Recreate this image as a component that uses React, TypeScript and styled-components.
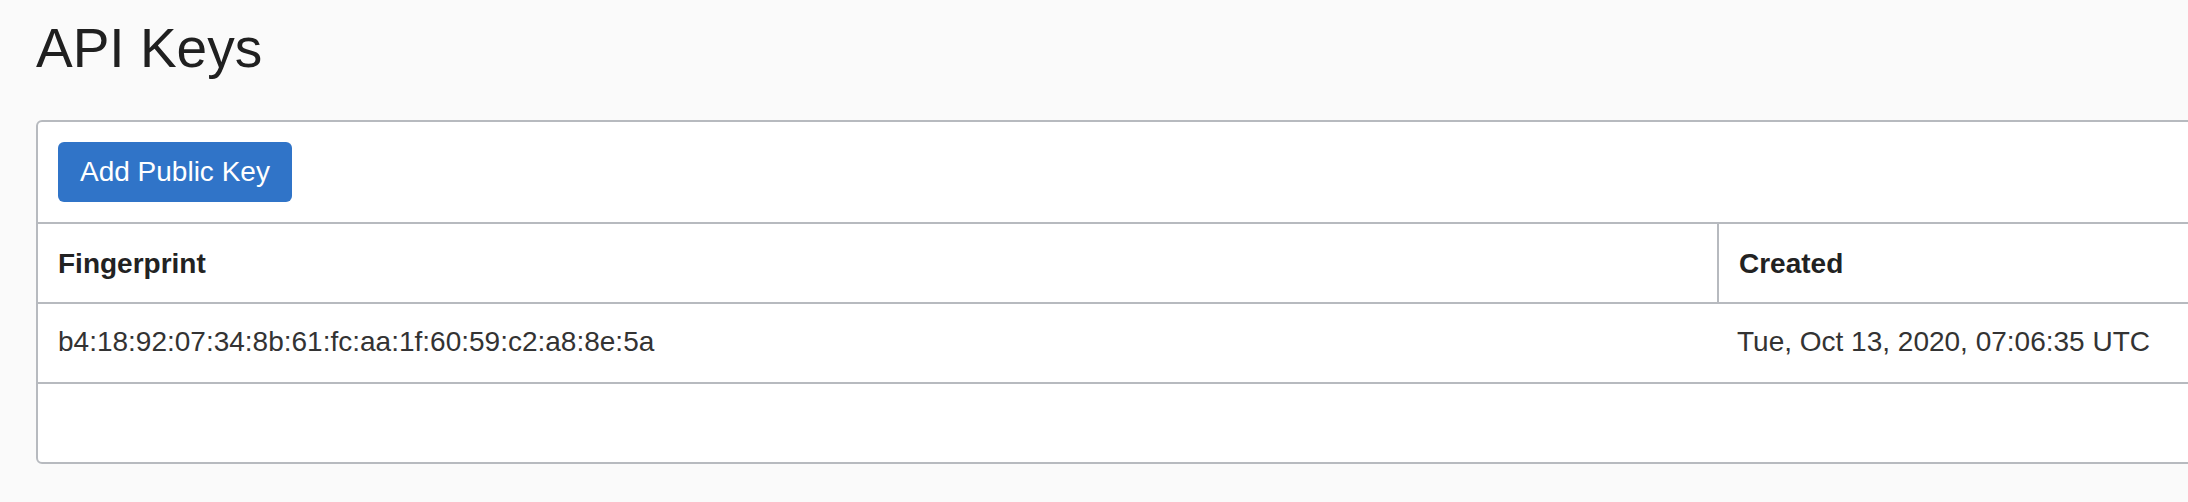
import React from "react";
import styled, { createGlobalStyle } from "styled-components";

const GlobalStyle = createGlobalStyle`
  html, body {
    margin: 0;
    padding: 0;
    background: #fafafa;
    overflow: hidden;
  }
  body {
    font-family: "Liberation Sans", Arial, Helvetica, sans-serif;
    color: #222222;
  }
`;

const Page = styled.main`
  padding: 16px 0 0 36px;
  overflow: hidden;
`;

const Title = styled.h1`
  margin: 0;
  font-size: 55px;
  line-height: 64px;
  font-weight: 400;
  color: #202020;
`;

const Card = styled.section`
  margin-top: 40px;
  width: 2400px;
  background: #ffffff;
  border: 2px solid #b7babf;
  border-radius: 6px;
  overflow: hidden;
`;

const Toolbar = styled.div`
  display: flex;
  align-items: center;
  padding: 20px;
  border-bottom: 2px solid #b7babf;
`;

const PrimaryButton = styled.button`
  height: 60px;
  padding: 0 22px;
  border: none;
  border-radius: 6px;
  background: #3074c8;
  color: #ffffff;
  font-family: "Liberation Sans", Arial, Helvetica, sans-serif;
  font-size: 28px;
  line-height: 60px;
  cursor: pointer;
`;

const Table = styled.div`
  display: grid;
  grid-template-columns: 1679px 1fr;
`;

const HeaderCell = styled.div<{ $divider?: boolean }>`
  padding: 21px 20px 19px;
  font-size: 28px;
  line-height: 38px;
  font-weight: 700;
  color: #222222;
  border-bottom: 2px solid #b7babf;
  border-left: ${(p) => (p.$divider ? "2px solid #b7babf" : "none")};
`;

const BodyCell = styled.div`
  padding: 19px 20px 21px;
  font-size: 28px;
  line-height: 38px;
  color: #333333;
  border-bottom: 2px solid #b7babf;
  white-space: nowrap;
`;

const EmptyRow = styled.div`
  grid-column: 1 / -1;
  height: 78px;
`;

const keys = [
  {
    fingerprint: "b4:18:92:07:34:8b:61:fc:aa:1f:60:59:c2:a8:8e:5a",
    created: "Tue, Oct 13, 2020, 07:06:35 UTC",
  },
];

export default function App() {
  return (
    <>
      <GlobalStyle />
      <Page>
        <Title>API Keys</Title>
        <Card>
          <Toolbar>
            <PrimaryButton type="button">Add Public Key</PrimaryButton>
          </Toolbar>
          <Table>
            <HeaderCell>Fingerprint</HeaderCell>
            <HeaderCell $divider>Created</HeaderCell>
            {keys.map((k) => (
              <React.Fragment key={k.fingerprint}>
                <BodyCell>{k.fingerprint}</BodyCell>
                <BodyCell>{k.created}</BodyCell>
              </React.Fragment>
            ))}
            <EmptyRow />
          </Table>
        </Card>
      </Page>
    </>
  );
}
